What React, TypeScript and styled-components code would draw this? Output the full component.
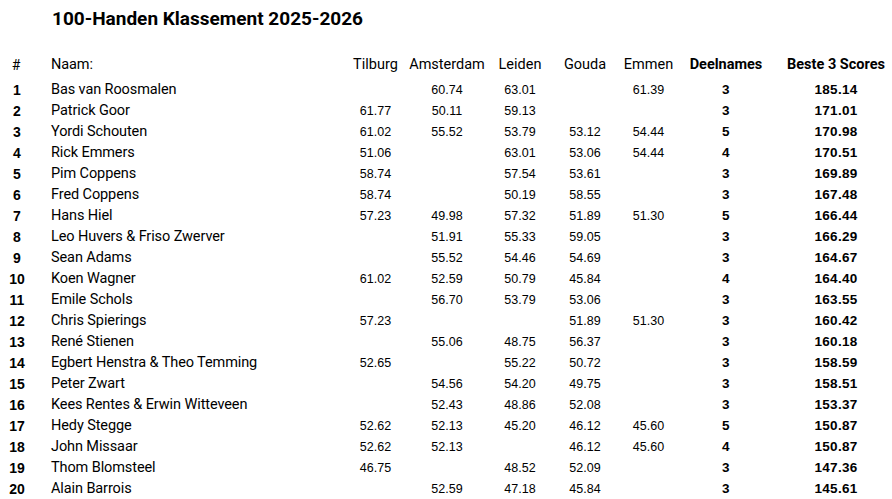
import React from "react";
import styled, { createGlobalStyle } from "styled-components";

const GlobalStyle = createGlobalStyle`
  html, body { margin: 0; padding: 0; background: #ffffff; }
  body { overflow: hidden; color: #000; }
`;

type Row = {
  rank: number;
  name: string;
  scores: (string | null)[];
  count: number;
  best: string;
};

const cities = ["Tilburg", "Amsterdam", "Leiden", "Gouda", "Emmen"];

const rows: Row[] = [
  { rank: 1, name: "Bas van Roosmalen", scores: [null, "60.74", "63.01", null, "61.39"], count: 3, best: "185.14" },
  { rank: 2, name: "Patrick Goor", scores: ["61.77", "50.11", "59.13", null, null], count: 3, best: "171.01" },
  { rank: 3, name: "Yordi Schouten", scores: ["61.02", "55.52", "53.79", "53.12", "54.44"], count: 5, best: "170.98" },
  { rank: 4, name: "Rick Emmers", scores: ["51.06", null, "63.01", "53.06", "54.44"], count: 4, best: "170.51" },
  { rank: 5, name: "Pim Coppens", scores: ["58.74", null, "57.54", "53.61", null], count: 3, best: "169.89" },
  { rank: 6, name: "Fred Coppens", scores: ["58.74", null, "50.19", "58.55", null], count: 3, best: "167.48" },
  { rank: 7, name: "Hans Hiel", scores: ["57.23", "49.98", "57.32", "51.89", "51.30"], count: 5, best: "166.44" },
  { rank: 8, name: "Leo Huvers & Friso Zwerver", scores: [null, "51.91", "55.33", "59.05", null], count: 3, best: "166.29" },
  { rank: 9, name: "Sean Adams", scores: [null, "55.52", "54.46", "54.69", null], count: 3, best: "164.67" },
  { rank: 10, name: "Koen Wagner", scores: ["61.02", "52.59", "50.79", "45.84", null], count: 4, best: "164.40" },
  { rank: 11, name: "Emile Schols", scores: [null, "56.70", "53.79", "53.06", null], count: 3, best: "163.55" },
  { rank: 12, name: "Chris Spierings", scores: ["57.23", null, null, "51.89", "51.30"], count: 3, best: "160.42" },
  { rank: 13, name: "René Stienen", scores: [null, "55.06", "48.75", "56.37", null], count: 3, best: "160.18" },
  { rank: 14, name: "Egbert Henstra & Theo Temming", scores: ["52.65", null, "55.22", "50.72", null], count: 3, best: "158.59" },
  { rank: 15, name: "Peter Zwart", scores: [null, "54.56", "54.20", "49.75", null], count: 3, best: "158.51" },
  { rank: 16, name: "Kees Rentes & Erwin Witteveen", scores: [null, "52.43", "48.86", "52.08", null], count: 3, best: "153.37" },
  { rank: 17, name: "Hedy Stegge", scores: ["52.62", "52.13", "45.20", "46.12", "45.60"], count: 5, best: "150.87" },
  { rank: 18, name: "John Missaar", scores: ["52.62", "52.13", null, "46.12", "45.60"], count: 4, best: "150.87" },
  { rank: 19, name: "Thom Blomsteel", scores: ["46.75", null, "48.52", "52.09", null], count: 3, best: "147.36" },
  { rank: 20, name: "Alain Barrois", scores: [null, "52.59", "47.18", "45.84", null], count: 3, best: "145.61" },
];

const Page = styled.div`
  width: 892px;
  height: 499px;
  padding-top: 8px;
  box-sizing: border-box;
  font-family: Roboto, "Liberation Sans", sans-serif;
`;

const Title = styled.h1`
  margin: 0 0 24px 0;
  padding-left: 52px;
  font-family: Roboto, "Liberation Sans", sans-serif;
  font-weight: 700;
  font-size: 19px;
  line-height: 22px;
  color: #000;
`;

const Grid = styled.div`
  display: grid;
  grid-template-columns: 34px 306px 71px 72px 74px 56px 71px 84px 124px;
`;

const HeaderRow = styled.div`
  display: contents;
`;

const BodyRow = styled.div`
  display: contents;
`;

const Cell = styled.div<{ $head?: boolean }>`
  height: ${(p) => (p.$head ? "25px" : "21px")};
  padding-bottom: ${(p) => (p.$head ? "4px" : "0")};
  box-sizing: border-box;
  display: flex;
  align-items: center;
  justify-content: center;
  white-space: nowrap;
`;

const RankCell = styled(Cell)`
  font-family: "Liberation Sans", Arial, sans-serif;
  font-weight: 700;
  font-size: 14px;
`;

const HashCell = styled(Cell)`
  font-family: Roboto, sans-serif;
  font-size: 14px;
  padding-right: 2px;
`;

const NameCell = styled(Cell)`
  justify-content: flex-start;
  padding-left: 17px;
  font-family: Roboto, sans-serif;
  font-size: 14.5px;
  letter-spacing: -0.1px;
`;

const HeadText = styled(Cell)<{ $bold?: boolean; $shift?: number }>`
  font-family: Roboto, sans-serif;
  font-size: 14.5px;
  font-weight: ${(p) => (p.$bold ? 700 : 400)};
  padding-left: ${(p) => (p.$shift ? `${p.$shift}px` : "0")};
`;

const ScoreCell = styled(Cell)`
  font-family: "Liberation Sans", Arial, sans-serif;
  font-size: 12.5px;
`;

const BoldNum = styled(Cell)<{ $shift?: number }>`
  font-family: "Liberation Sans", Arial, sans-serif;
  font-weight: 700;
  font-size: 13.5px;
  letter-spacing: 0.3px;
  padding-left: ${(p) => (p.$shift ? `${p.$shift}px` : "0")};
`;

export default function App() {
  return (
    <Page>
      <GlobalStyle />
      <Title>100-Handen Klassement 2025-2026</Title>
      <Grid>
        <HeaderRow>
          <HashCell $head>#</HashCell>
          <NameCell $head>Naam:</NameCell>
          {cities.map((c) => (
            <HeadText $head key={c}>
              {c}
            </HeadText>
          ))}
          <HeadText $head $bold>
            Deelnames
          </HeadText>
          <HeadText $head $bold $shift={12}>
            Beste 3 Scores
          </HeadText>
        </HeaderRow>
        {rows.map((r) => (
          <BodyRow key={r.rank}>
            <RankCell>{r.rank}</RankCell>
            <NameCell>{r.name}</NameCell>
            {r.scores.map((s, i) => (
              <ScoreCell key={i}>{s ?? ""}</ScoreCell>
            ))}
            <BoldNum>{r.count}</BoldNum>
            <BoldNum $shift={12}>{r.best}</BoldNum>
          </BodyRow>
        ))}
      </Grid>
    </Page>
  );
}
